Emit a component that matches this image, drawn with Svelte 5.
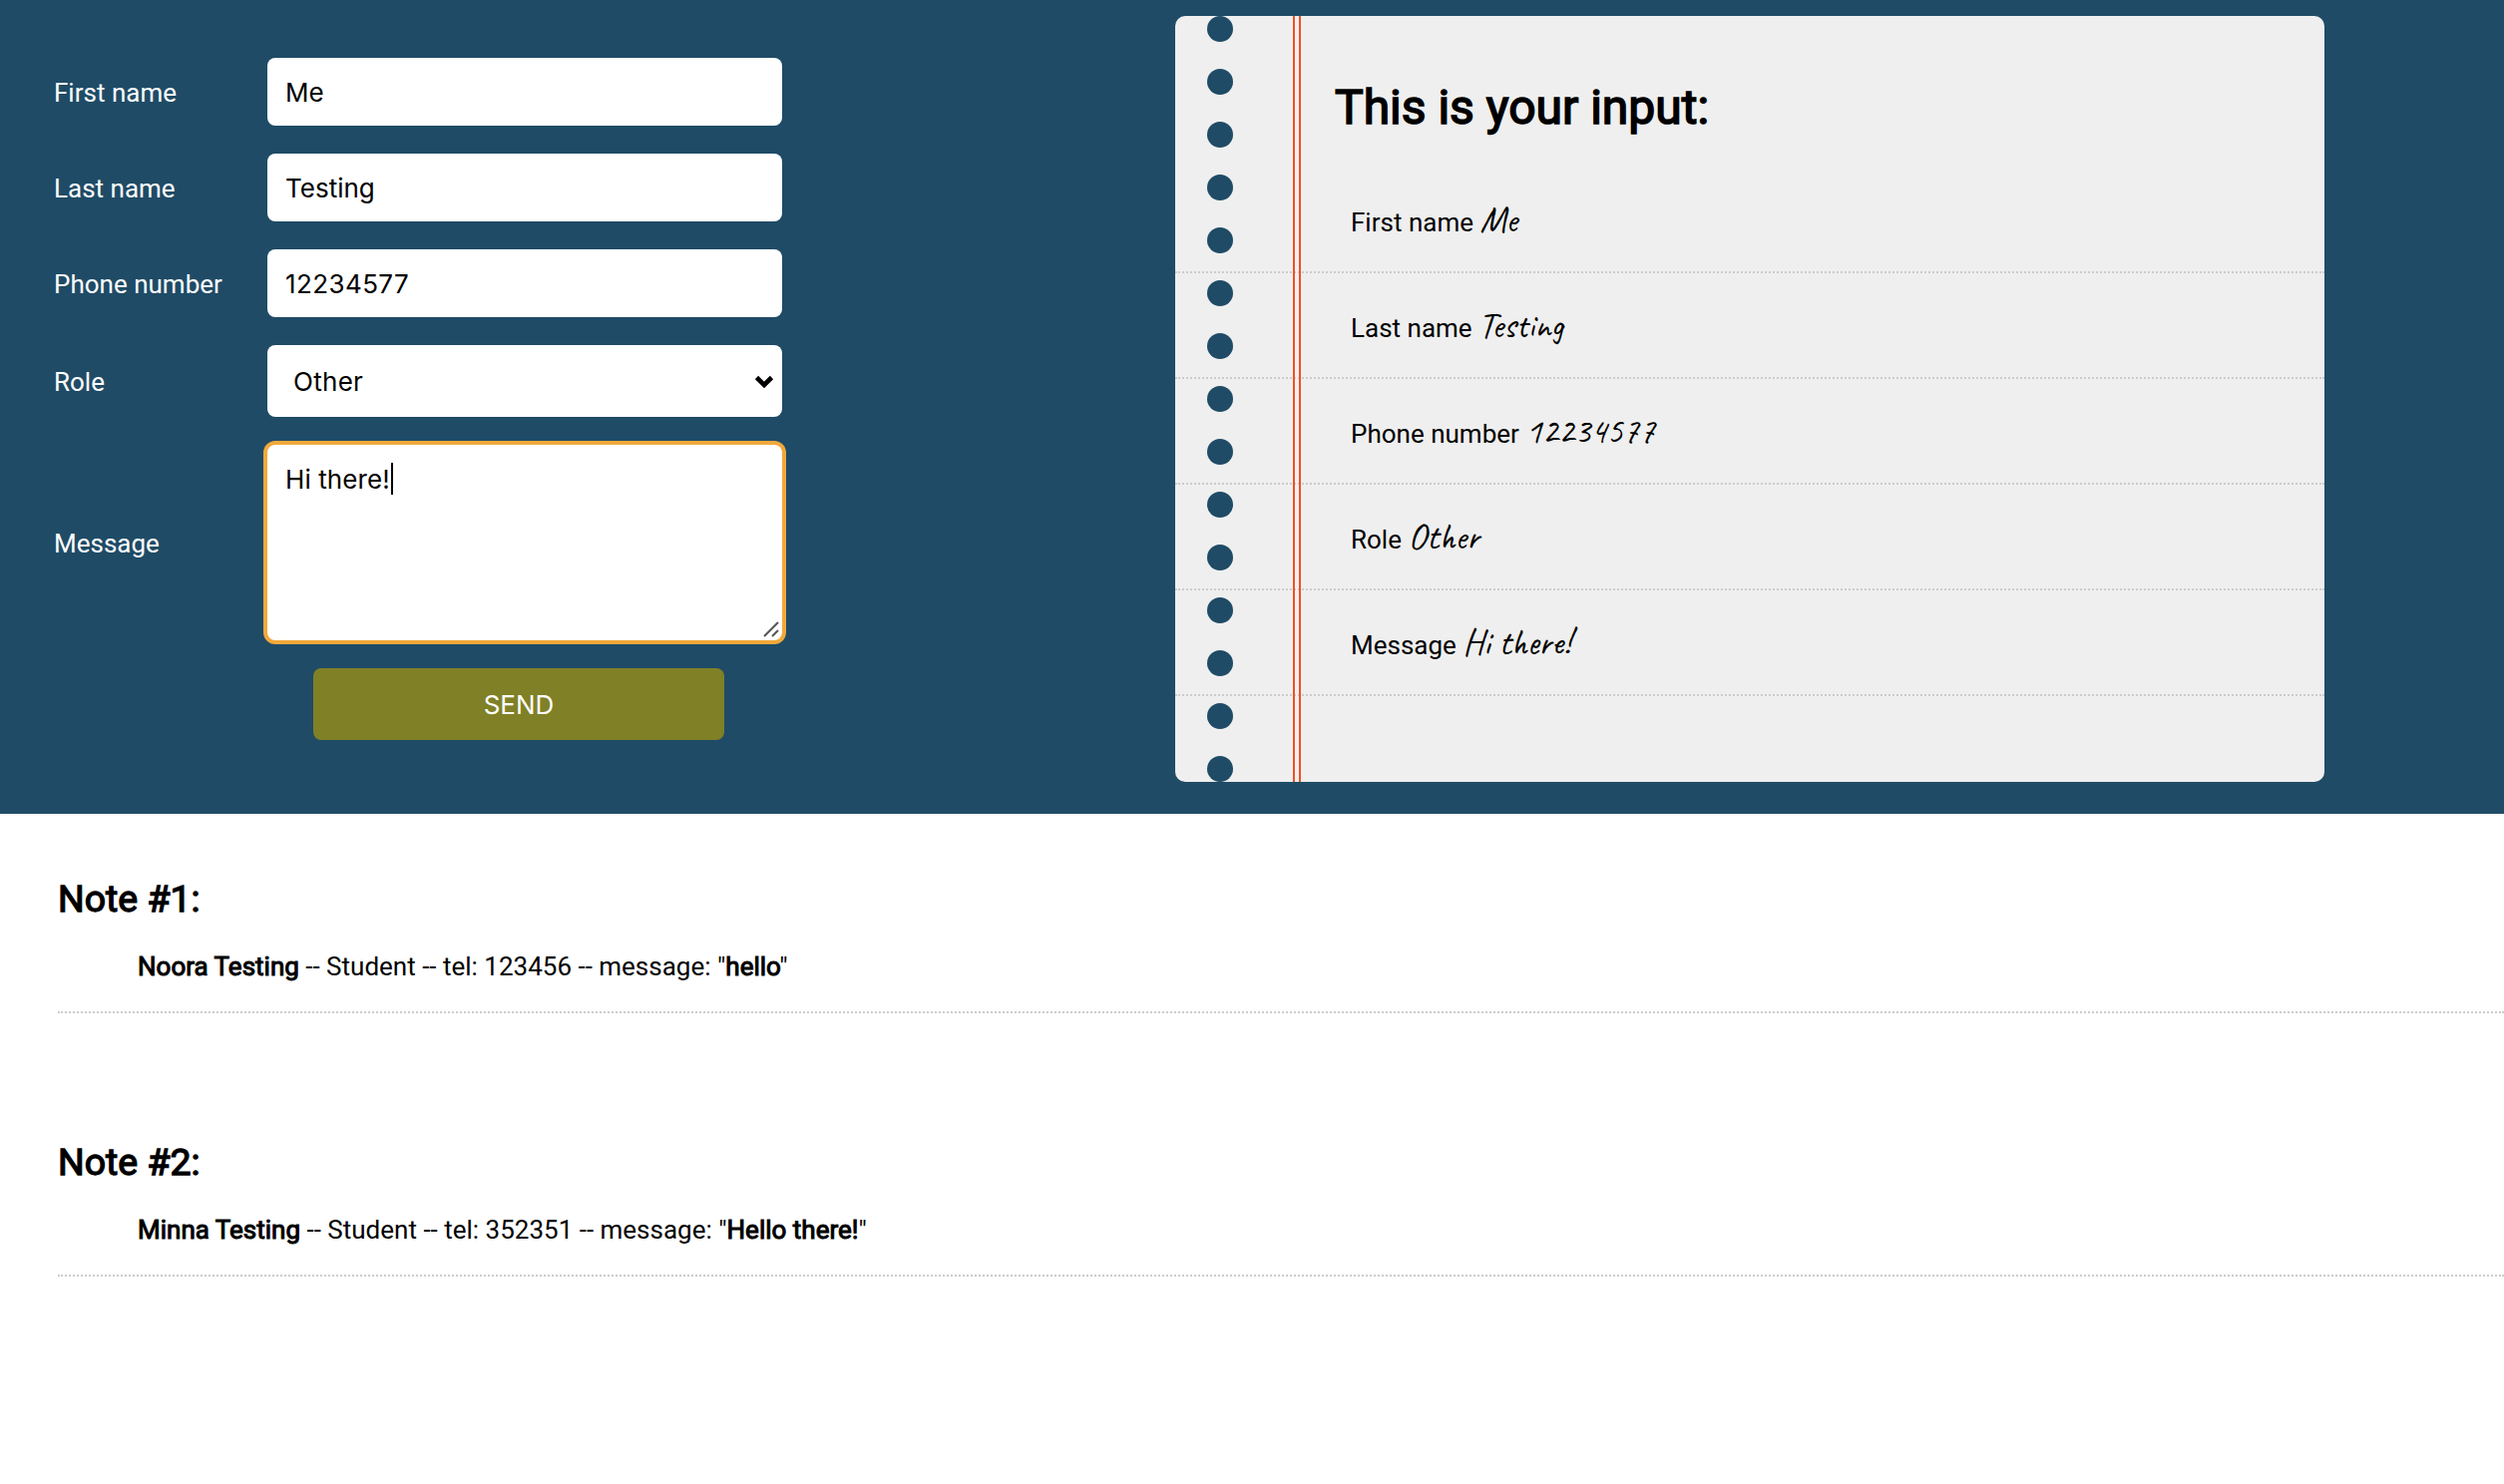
<script>
  let entry = $state({ first: 'Me', last: 'Testing', phone: '12234577', role: 'Other', message: 'Hi there!' });
  const roles = ['Student', 'Teacher', 'Other'];

  let rows = $derived([
    ['First name', entry.first],
    ['Last name', entry.last],
    ['Phone number', entry.phone],
    ['Role', entry.role],
    ['Message', entry.message]
  ]);

  const notes = [
    { name: 'Noora Testing', role: 'Student', tel: '123456', message: 'hello' },
    { name: 'Minna Testing', role: 'Student', tel: '352351', message: 'Hello there!' }
  ];

  const holes = Array.from({ length: 15 }, (_, i) => i);
</script>

<main>
  <section class="top">
    <form>
      <label for="first">First name</label>
      <input id="first" bind:value={entry.first} />
      <label for="last">Last name</label>
      <input id="last" bind:value={entry.last} />
      <label for="phone">Phone number</label>
      <input id="phone" class="digits" bind:value={entry.phone} />
      <label for="role">Role</label>
      <div class="field">
        <select id="role" bind:value={entry.role}>
          {#each roles as role}<option>{role}</option>{/each}
        </select>
        <svg class="chevron" viewBox="0 0 20 14"><path d="M2.5 2.5 L10 10 L17.5 2.5" /></svg>
      </div>
      <label for="message">Message</label>
      <div class="field">
        <textarea id="message" class="focused" bind:value={entry.message}></textarea>
        <span class="caret"></span>
        <svg class="grip" viewBox="0 0 16 16"><path d="M1 15 L15 1 M9 15 L15 9" /></svg>
      </div>
      <button type="button">SEND</button>
    </form>

    <article class="paper">
      <div class="holes">
        {#each holes as hole (hole)}<i></i>{/each}
      </div>
      <div class="margin"></div>
      <h1>This is your input:</h1>
      {#each rows as [label, value]}
        <p class="line">{label} <span class="hand">{value}</span></p>
      {/each}
    </article>
  </section>

  <section class="notes">
    {#each notes as note, i}
      <article class="note">
        <h2>Note #{i + 1}:</h2>
        <p><b>{note.name}</b> -- {note.role} -- tel: {note.tel} -- message: "<b>{note.message}</b>"</p>
      </article>
    {/each}
  </section>
</main>

<style>
  :global(body) { background: #fff; }
  main {
    width: 2510px;
    height: 1488px;
    overflow: hidden;
    color: #000;
    font: 26px/30px Roboto, sans-serif;
  }
  .top {
    display: flex;
    align-items: flex-start;
    box-sizing: border-box;
    height: 816px;
    padding: 16px 0 0 54px;
    background: #1f4b66;
  }
  form {
    display: grid;
    grid-template-columns: 214px 516px;
    grid-template-rows: 68px 68px 68px 72px 196px 72px;
    row-gap: 28px;
    align-items: center;
    width: 1124px;
    padding-top: 42px;
  }
  label { padding-top: 2px; color: #fff; }
  .field { position: relative; height: 100%; }
  input, select, textarea {
    display: block;
    box-sizing: border-box;
    width: 100%;
    height: 100%;
    margin: 0;
    border: 0;
    border-radius: 8px;
    padding: 0 18px;
    appearance: none;
    background: #fff;
    color: #000;
    font: 26px/32px Inter, sans-serif;
    outline: 0;
  }
  .digits { letter-spacing: 0.4px; }
  select { padding: 2px 26px 0; letter-spacing: 0.3px; }
  textarea { padding: 19px 18px; resize: none; letter-spacing: 0.1px; }
  .focused { box-shadow: 0 0 0 4px #f2a93b; }
  .chevron { position: absolute; right: 8px; top: 30px; width: 20px; height: 14px; }
  .chevron path { fill: none; stroke: #000; stroke-width: 4.6; }
  .caret { position: absolute; left: 124px; top: 18px; width: 2px; height: 32px; background: #000; }
  .grip { position: absolute; right: 3px; bottom: 3px; width: 16px; height: 16px; }
  .grip path { fill: none; stroke: #555; stroke-width: 2; }
  button {
    grid-column: 1 / -1;
    width: 412px;
    height: 72px;
    margin-left: 260px;
    border: 0;
    border-radius: 8px;
    padding: 2px 0 0;
    background: #808026;
    color: #fff;
    font: 26px/30px Inter, sans-serif;
  }
  .paper {
    position: relative;
    box-sizing: border-box;
    width: 1152px;
    height: 768px;
    overflow: hidden;
    border-radius: 10px;
    background: #efefef;
  }
  .holes {
    position: absolute;
    left: 32px;
    top: 0;
    display: flex;
    flex-direction: column;
    gap: 27px;
  }
  .holes i { width: 26px; height: 26px; border-radius: 50%; background: #1f4b66; }
  .margin {
    position: absolute;
    left: 118px;
    top: 0;
    box-sizing: border-box;
    width: 8px;
    height: 100%;
    border: solid #ee5226;
    border-width: 0 2px;
  }
  h1 {
    margin: 64px 0 32px 160px;
    font-size: 48px;
    line-height: 56px;
    font-weight: 400;
    -webkit-text-stroke: 1.6px #000;
  }
  .line {
    box-sizing: border-box;
    height: 106px;
    margin: 0;
    padding: 37px 0 0 176px;
    border-bottom: 2px dotted #ccc;
    white-space: nowrap;
  }
  .hand { font: 400 36px/30px Caveat, cursive; }
  .notes { padding: 63px 0 0 58px; }
  .note { height: 264px; }
  .note h2 {
    margin: 0;
    font-size: 37.44px;
    line-height: 44px;
    font-weight: 400;
    -webkit-text-stroke: 1.3px #000;
  }
  .note p {
    margin: 0;
    padding: 31px 0 30px 80px;
    border-bottom: 2px dotted #ccc;
  }
  b { font-weight: 400; -webkit-text-stroke: 1px #000; }
</style>
